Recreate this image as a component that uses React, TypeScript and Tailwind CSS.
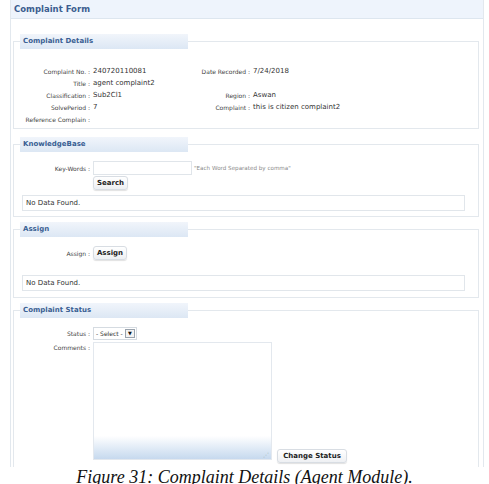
import React from "react";

const F = { fontFamily: '"DejaVu Sans", Verdana, sans-serif' } as React.CSSProperties;

function Legend({ children }: { children: React.ReactNode }) {
  return (
    <legend className="ml-[6px] h-[15px] w-[168px] bg-gradient-to-b from-[#f1f5fb] to-[#dce7f4] pl-[3px] text-[7px] font-bold leading-[15px] text-[#3a5f93]">
      {children}
    </legend>
  );
}

function Btn({ children, w }: { children: React.ReactNode; w: string }) {
  return (
    <div
      className={`flex h-[14px] ${w} items-center justify-center rounded-[3px] border border-[#d8dde3] bg-gradient-to-b from-white to-[#eef0f3] text-[7px] font-bold text-[#222] shadow-[0_1px_1px_rgba(0,0,0,0.12)]`}
    >
      {children}
    </div>
  );
}

function Label({ children }: { children: React.ReactNode }) {
  return <div className="pr-[1px] text-right text-[6px] text-[#444] whitespace-nowrap">{children}</div>;
}

function Val({ children }: { children: React.ReactNode }) {
  return <div className="pl-[2px] text-[7px] text-[#333] whitespace-nowrap">{children}</div>;
}

function NoData() {
  return (
    <div className="ml-[8px] flex h-[16px] w-[443px] items-center border border-[#e1e6eb] pl-[3px] text-[7px] text-[#333]">
      No Data Found.
    </div>
  );
}

export default function App() {
  return (
    <div className="relative h-[484px] w-[489px] overflow-hidden bg-white" style={F}>
      <div className="ml-[10px] flex h-[467px] w-[474px] flex-col overflow-hidden border-x border-[#e2e8ee]">
        <div className="flex h-[19px] shrink-0 items-center border-b border-[#dde6ef] bg-[#eef4fc] pl-[3px] text-[8.5px] font-bold text-[#3b5d8f]">
          Complaint Form
        </div>

        {/* Complaint Details */}
        <fieldset className="ml-[2px] mt-[15px] h-[95px] w-[466px] shrink-0 border border-[#e3e8ed]">
          <Legend>Complaint Details</Legend>
          <div className="grid grid-cols-[77px_100px_60px_1fr] auto-rows-[12px] items-center pt-[16px]">
            <Label>Complaint No. :</Label>
            <Val>240720110081</Val>
            <Label>Date Recorded :</Label>
            <Val>7/24/2018</Val>

            <Label>Title :</Label>
            <Val>agent complaint2</Val>
            <div />
            <div />

            <Label>Classification :</Label>
            <Val>Sub2Cl1</Val>
            <Label>Region :</Label>
            <Val>Aswan</Val>

            <Label>SolvePeriod :</Label>
            <Val>7</Val>
            <Label>Complaint :</Label>
            <Val>this is citizen complaint2</Val>

            <Label>Reference Complain :</Label>
            <Val>{""}</Val>
            <div />
            <div />
          </div>
        </fieldset>

        {/* KnowledgeBase */}
        <fieldset className="ml-[2px] mt-[8px] h-[80px] w-[466px] shrink-0 border border-[#e3e8ed]">
          <Legend>KnowledgeBase</Legend>
          <div className="flex items-center pt-[9px]">
            <div className="w-[77px]">
              <Label>Key-Words :</Label>
            </div>
            <div className="ml-[2px] h-[14px] w-[99px] border border-[#e0e5ea] bg-white" />
            <div className="ml-[2px] text-[5.6px] text-[#8a8a8a]">"Each Word Separated by comma"</div>
          </div>
          <div className="ml-[79px] mt-[1px]">
            <Btn w="w-[35px]">Search</Btn>
          </div>
          <div className="mt-[5px]">
            <NoData />
          </div>
        </fieldset>

        {/* Assign */}
        <fieldset className="ml-[2px] mt-[5px] h-[76px] w-[466px] shrink-0 border border-[#e3e8ed]">
          <Legend>Assign</Legend>
          <div className="flex items-center pt-[9px]">
            <div className="w-[77px]">
              <Label>Assign :</Label>
            </div>
            <div className="ml-[2px]">
              <Btn w="w-[34px]">Assign</Btn>
            </div>
          </div>
          <div className="mt-[15px]">
            <NoData />
          </div>
        </fieldset>

        {/* Complaint Status */}
        <fieldset className="ml-[2px] mt-[5px] min-h-0 w-[466px] flex-1 border border-b-0 border-[#e3e8ed]">
          <Legend>Complaint Status</Legend>
          <div className="flex items-center pt-[9px]">
            <div className="w-[77px]">
              <Label>Status :</Label>
            </div>
            <div className="ml-[2px] flex h-[13px] w-[44px] items-center border border-[#d5dbe1] bg-white">
              <span className="pl-[2px] text-[6px] text-[#333] whitespace-nowrap">- Select -</span>
              <span className="ml-auto mr-[1px] flex h-[9px] w-[10px] items-center justify-center border border-[#9aa3ad] bg-[#f3f3f3] text-[5px] leading-none text-[#111]">
                ▼
              </span>
            </div>
          </div>
          <div className="mt-[2px] flex">
            <div className="w-[77px] pt-[1px]">
              <Label>Comments :</Label>
            </div>
            <div className="relative ml-[2px] h-[118px] w-[179px] border border-[#e3e8ee] bg-gradient-to-b from-white from-80% to-[#c6d9ee]">
              <span className="absolute bottom-[1px] right-[2px] text-[6px] leading-none text-[#9aa]">⋰</span>
            </div>
            <div className="ml-[5px] self-end mb-[-3px]">
              <Btn w="w-[70px]">Change Status</Btn>
            </div>
          </div>
        </fieldset>
      </div>
      <div
        className="pt-[1px] text-center text-[18px] italic leading-[18px] text-[#111]"
        style={{ fontFamily: '"Liberation Serif", "Times New Roman", serif' }}
      >
        Figure 31: Complaint Details (Agent Module).
      </div>
    </div>
  );
}
